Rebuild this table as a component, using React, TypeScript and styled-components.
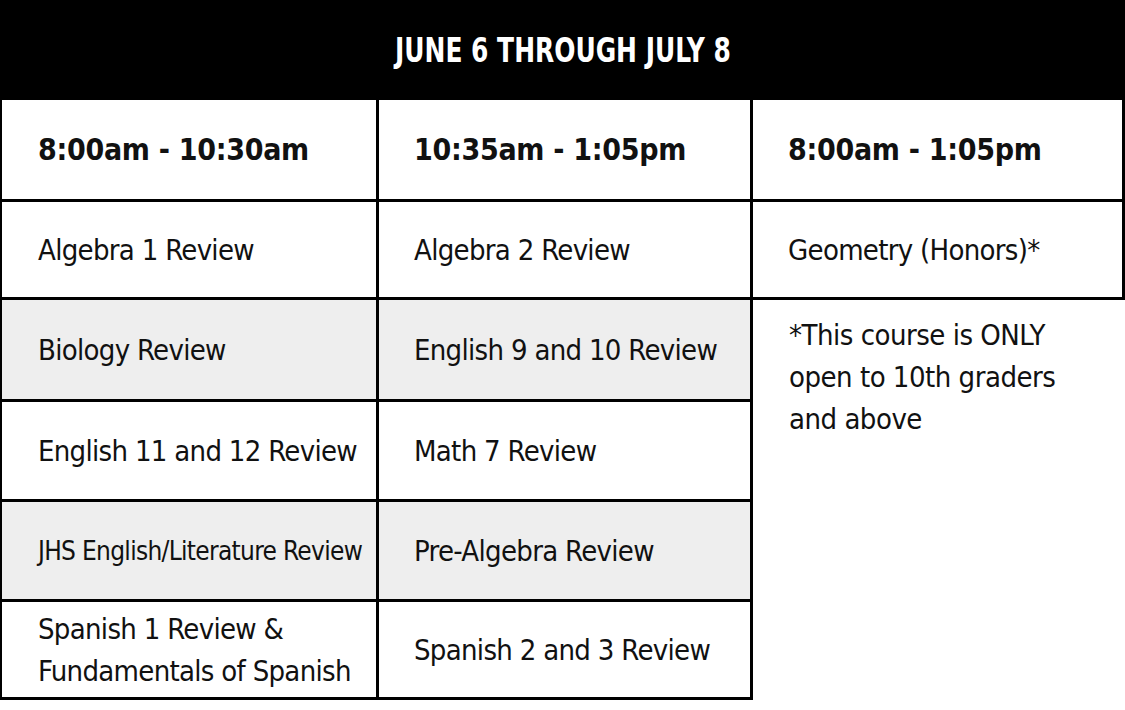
import React from 'react';
import styled, { createGlobalStyle } from 'styled-components';

const GlobalStyle = createGlobalStyle`
  html, body {
    margin: 0;
    padding: 0;
    background: #ffffff;
  }
`;

const condensed = "'DejaVu Sans Condensed', 'DejaVu Sans', sans-serif";

const Page = styled.div`
  width: 1125px;
  background: #ffffff;
`;

const Banner = styled.div`
  height: 100px;
  background: #000000;
  color: #ffffff;
  display: flex;
  align-items: center;
  justify-content: center;
  font-family: ${condensed};
  font-weight: 700;
  font-size: 33px;
`;

// the original face is much narrower than anything installed
const BannerText = styled.span`
  display: inline-block;
  transform: scaleX(0.84);
  white-space: nowrap;
`;

const Schedule = styled.div`
  display: grid;
  grid-template-columns: 379px 374px 372px;
  grid-template-rows: 102px 98px 102px 100px 100px 98px;
`;

const Cell = styled.div<{ $first?: boolean; $shade?: boolean; $head?: boolean; $small?: boolean }>`
  box-sizing: border-box;
  display: flex;
  align-items: center;
  padding: 0 0 0 ${props => (props.$first ? '36px' : '35px')};
  border-right: 3px solid #000;
  border-bottom: 3px solid #000;
  border-left: ${props => (props.$first ? '2px solid #000' : 'none')};
  background: ${props => (props.$shade ? '#eeeeee' : '#ffffff')};
  color: #111111;
  font-family: ${condensed};
  font-weight: ${props => (props.$head ? 700 : 400)};
  font-size: ${props => (props.$head ? '30px' : props.$small ? '26px' : '29px')};
  letter-spacing: ${props => (props.$head ? '-0.3px' : '-0.7px')};
  line-height: 42px;
  white-space: pre;
  overflow: hidden;
`;

const Note = styled.div`
  grid-column: 3;
  grid-row: 3 / span 4;
  padding: 14px 20px 0 36px;
  color: #111111;
  font-family: ${condensed};
  font-size: 29px;
  letter-spacing: -0.5px;
  line-height: 42px;
`;

const times = ['8:00am - 10:30am', '10:35am - 1:05pm', '8:00am - 1:05pm'];

const rows: [string, string][] = [
  ['Algebra 1 Review', 'Algebra 2 Review'],
  ['Biology Review', 'English 9 and 10 Review'],
  ['English 11 and 12 Review', 'Math 7 Review'],
  ['JHS English/Literature Review', 'Pre-Algebra Review'],
  ['Spanish 1 Review &\nFundamentals of Spanish', 'Spanish 2 and 3 Review'],
];

const App: React.FC = () => {
  return (
    <Page>
      <GlobalStyle />
      <Banner>
        <BannerText>JUNE 6 THROUGH JULY 8</BannerText>
      </Banner>
      <Schedule>
        {times.map((t, i) => (
          <Cell key={t} $head $first={i === 0}>
            {t}
          </Cell>
        ))}

        {rows.map(([a, b], i) => (
          <React.Fragment key={a}>
            <Cell $first $shade={i % 2 === 1} $small={a.length > 26 && !a.includes('\n')}>
              {a}
            </Cell>
            <Cell $shade={i % 2 === 1}>{b}</Cell>
            {i === 0 && <Cell>Geometry (Honors)*</Cell>}
          </React.Fragment>
        ))}

        <Note>
          *This course is ONLY
          <br />
          open to 10th graders
          <br />
          and above
        </Note>
      </Schedule>
    </Page>
  );
};

export default App;
